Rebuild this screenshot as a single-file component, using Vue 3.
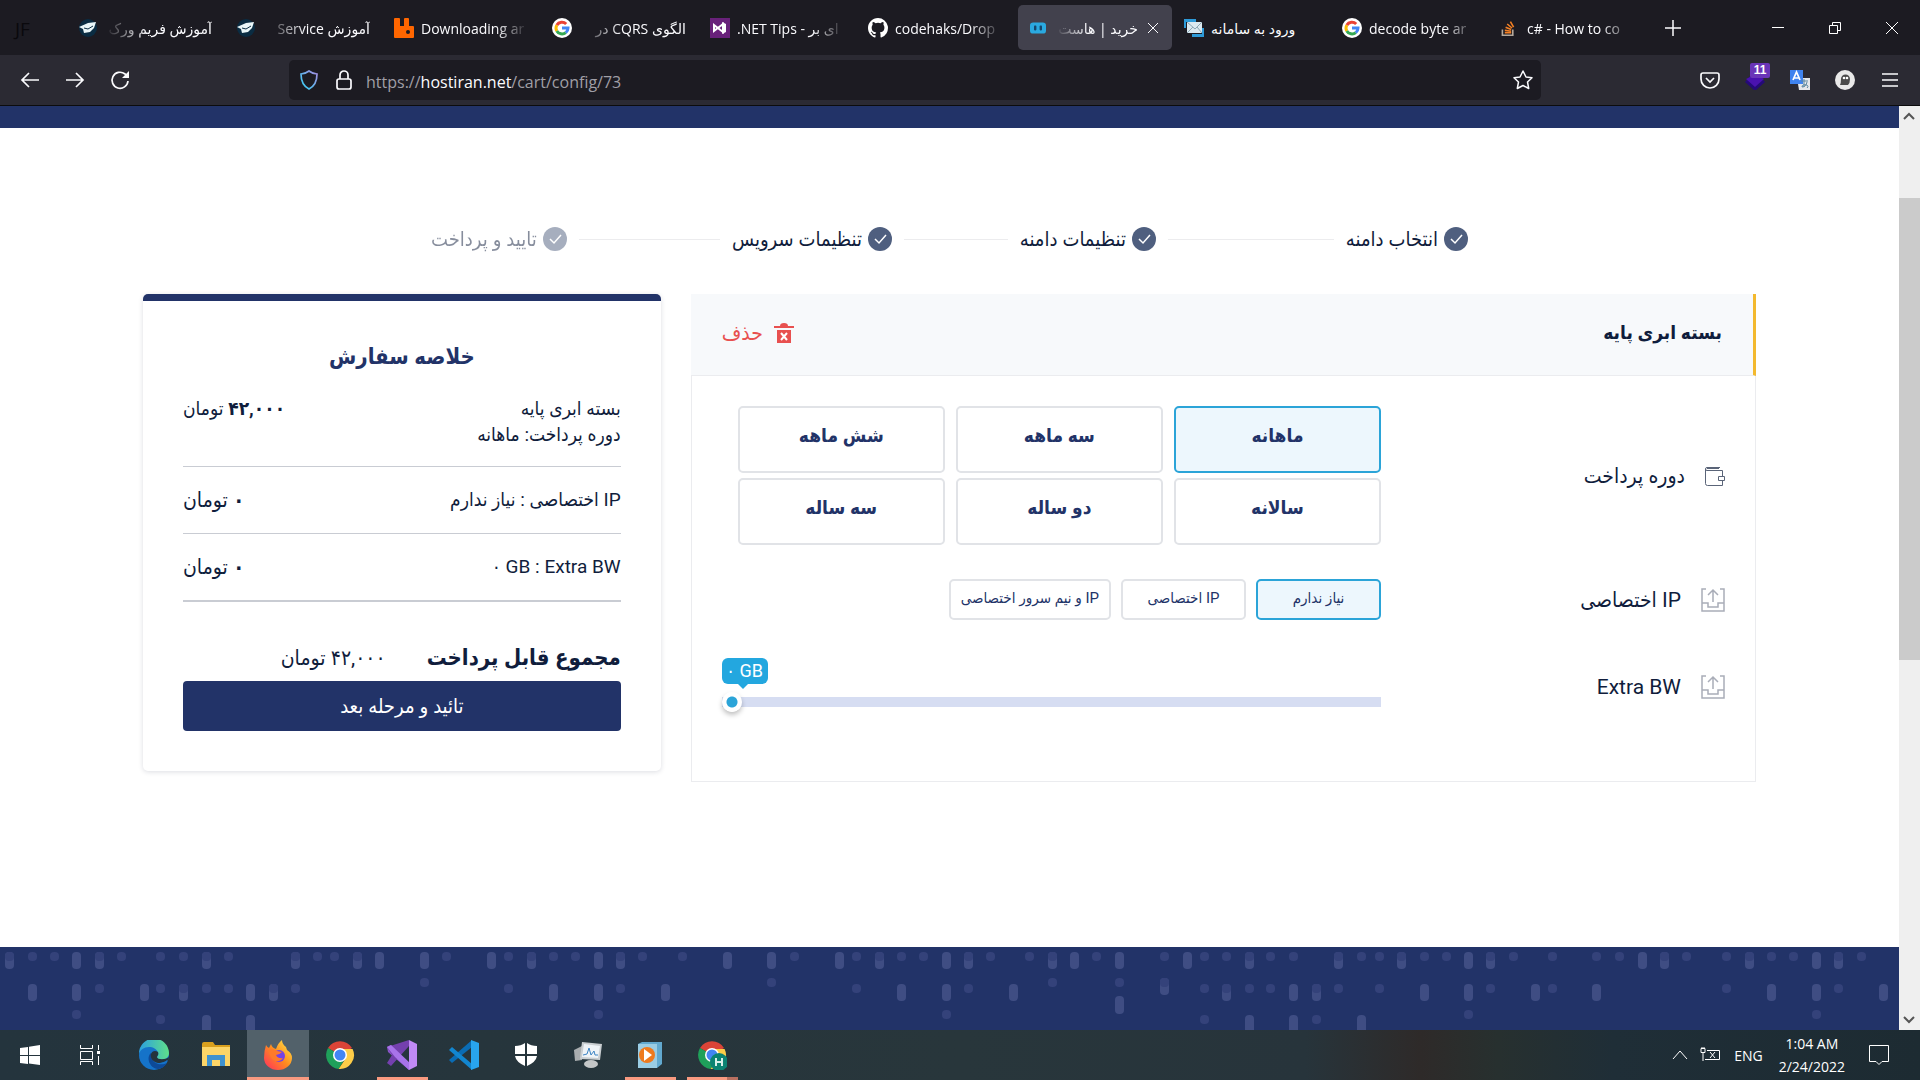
<script setup>
import { ref } from 'vue'

const tabs = [
  { icon: 'cap', title: 'آموزش فریم ورک', rtl: true },
  { icon: 'cap', title: 'آموزش Service', rtl: true },
  { icon: 'rabbit', title: 'Downloading ar' },
  { icon: 'google', title: 'الگوی CQRS در', rtl: true },
  { icon: 'vs', title: '.NET Tips - ای بر' },
  { icon: 'github', title: 'codehaks/Drop' },
  { icon: 'host', title: 'خرید | هاست', rtl: true, active: true },
  { icon: 'mail', title: 'ورود به سامانه', rtl: true, fits: true },
  { icon: 'google', title: 'decode byte ar' },
  { icon: 'stack', title: 'c# - How to co' },
]

const steps = [
  { label: 'انتخاب دامنه', line: 168 },
  { label: 'تنظیمات دامنه', line: 105 },
  { label: 'تنظیمات سرویس', line: 143 },
  { label: 'تایید و پرداخت', pending: true },
]

const periods = ['ماهانه', 'سه ماهه', 'شش ماهه', 'سالانه', 'دو ساله', 'سه ساله']
const ipChoices = ['نیاز ندارم', 'IP اختصاصی', 'IP و نیم سرور اختصاصی']
const period = ref('ماهانه')
const ip = ref('نیاز ندارم')
const bandwidth = ref(0)

const apps = [
  { icon: 'edge', name: 'Edge' },
  { icon: 'folder', name: 'File Explorer' },
  { icon: 'firefox', name: 'Firefox', state: 'focused' },
  { icon: 'chrome', name: 'Chrome' },
  { icon: 'studio', name: 'Visual Studio', state: 'open' },
  { icon: 'code', name: 'VS Code' },
  { icon: 'defender', name: 'Security' },
  { icon: 'monitor', name: 'Performance' },
  { icon: 'player', name: 'Media Player', state: 'open' },
  { icon: 'chromeH', name: 'Chrome profile', state: 'open stacked' },
]

const row = (top, height, xs) => xs.map((x) => ({ x, top, height }))
const drops = [
  ...row(5, 17, [9, 76, 99, 206, 295, 357, 379, 424, 491, 531, 598, 620, 727, 771, 839, 879, 946, 968, 1052, 1074, 1119, 1187, 1249, 1338, 1401, 1468, 1490, 1642, 1664, 1749, 1816, 1838]),
  ...row(37, 17, [32, 76, 144, 183, 250, 273, 553, 598, 665, 901, 946, 1013, 1226, 1293, 1316, 1424, 1468, 1535, 1596, 1771, 1816, 1883]),
  ...row(31, 17, [1164]),
  ...row(49, 18, [1119]),
  ...row(68, 20, [206, 250, 1249, 1293, 1361]),
]
const dots = [
  ...row(5, 9, [9, 32, 54, 99, 121, 160, 183, 206, 228, 295, 317, 334, 357, 446, 508, 531, 553, 575, 620, 642, 682, 794, 856, 879, 901, 923, 968, 990, 1029, 1052, 1096, 1164, 1204, 1226, 1249, 1270, 1293, 1338, 1361, 1379, 1401, 1424, 1446, 1490, 1513, 1552, 1596, 1619, 1664, 1686, 1726, 1749, 1771, 1793, 1838, 1861]),
  ...row(37, 9, [99, 160, 183, 206, 228, 273, 295, 508, 620, 856, 968, 1204, 1226, 1249, 1270, 1316, 1338, 1379, 1490, 1552, 1726, 1838]),
  ...row(31, 9, [424, 771, 1052, 1119, 1164]),
  ...row(63, 9, [76, 598, 946, 1468, 1816]),
  ...row(68, 9, [160, 1204, 1316]),
]
</script>

<template>
  <div class="screen">
    <header class="browser">
      <div class="tabstrip">
        <span class="profile">JF</span>
        <div class="tabs" role="tablist">
          <div v-for="(tab, i) in tabs" :key="i" class="tab" :class="{ active: tab.active }">
            <button class="tab-main" type="button" role="tab" :aria-selected="!!tab.active">
              <svg v-if="tab.icon === 'cap'" class="fav" viewBox="0 0 20 20"><circle cx="10" cy="10" r="9" fill="#0a2c42"/><path d="M1 9 10 5l8-1-2 6-4 4-6 1-1-4z" fill="#e9f6f8"/><path d="m6 10 4 1 5-3" stroke="#0a2c42" fill="none"/></svg>
              <svg v-else-if="tab.icon === 'rabbit'" class="fav" viewBox="0 0 20 20"><path d="M0 1q0-1 1-1h4q1 0 1 1v7h4V1q0-1 1-1h3q1 0 1 1v7h4q1 0 1 1v10q0 1-1 1H1q-1 0-1-1z" fill="#f60"/><circle cx="14" cy="14" r="2" fill="#1c1b22"/></svg>
              <svg v-else-if="tab.icon === 'google'" class="fav" viewBox="0 0 20 20"><circle cx="10" cy="10" r="10" fill="#fff"/><g fill="none" stroke-width="3"><path d="M14.200 6A6 6 0 0 0 4.800 7.100" stroke="#ea4335"/><path d="M4.800 7.100a6 6 0 0 0 0 5.800" stroke="#fbbc05"/><path d="M4.800 12.900a6 6 0 0 0 9 1.700" stroke="#34a853"/><path d="M13.800 14.600A6 6 0 0 0 16 10h-6" stroke="#4285f4"/></g></svg>
              <svg v-else-if="tab.icon === 'vs'" class="fav" viewBox="0 0 20 20"><path d="M0 0h20v20H0z" fill="#68217a"/><path d="m4 7 9 7V6l-9 7z" fill="none" stroke="#fff" stroke-width="2"/><path d="m12 4 4 2v8l-4 2z" fill="#fff"/></svg>
              <svg v-else-if="tab.icon === 'github'" class="fav" viewBox="0 0 16 16"><path fill="#fff" d="M8 0C3.580 0 0 3.580 0 8c0 3.540 2.290 6.530 5.470 7.590.4.070.55-.17.55-.38V13.700c-2.010.37-2.530-.49-2.690-.94-.09-.23-.48-.94-.82-1.130-.28-.15-.68-.52-.01-.53.63-.01 1.080.58 1.230.82.72 1.210 1.870.87 2.330.66.07-.52.28-.87.51-1.070-1.780-.2-3.640-.89-3.640-3.950 0-.87.31-1.590.82-2.150-.08-.2-.36-1.020.08-2.120 0 0 .67-.21 2.200.82a7.600 7.600 0 0 1 4 0c1.530-1.040 2.200-.82 2.200-.82.44 1.100.16 1.920.08 2.120.51.560.82 1.270.82 2.150 0 3.070-1.870 3.750-3.650 3.950.29.25.54.73.54 1.480v2.200c0 .21.15.46.55.38A8 8 0 0 0 8 0z"/></svg>
              <svg v-else-if="tab.icon === 'host'" class="fav" viewBox="0 0 20 20"><rect x="0" y="3" width="20" height="14" rx="4" fill="#2aa9e0"/><rect x="5" y="7" width="3" height="6" rx="1" fill="#16466b"/><rect x="12" y="7" width="3" height="6" rx="1" fill="#16466b"/></svg>
              <svg v-else-if="tab.icon === 'mail'" class="fav" viewBox="0 0 20 20"><path d="M0 1h12v3H2v6H0zM20 19H8v-3h10v-6h2z" fill="#2d9ad8"/><path d="M3 4h15v11H3z" fill="#dbe9f0"/><path d="m3 4 8 7 7-7M3 15l6-6m9 6-5-6" fill="none" stroke="#8ba7b5"/></svg>
              <svg v-else class="fav small" viewBox="0 0 20 20"><path d="M3 12v7h13v-7" fill="none" stroke="#b5a99c" stroke-width="2"/><path d="M6 16h8M6 13l8 1M7 9l7 3M9 5l6 5M13 2l4 7" stroke="#f48024" stroke-width="2"/></svg>
              <span class="tab-title" :class="{ fits: tab.fits }" :dir="tab.rtl ? 'rtl' : 'ltr'">{{ tab.title }}</span>
            </button>
            <button v-if="tab.active" class="tab-close" type="button" aria-label="Close tab">
              <svg width="12" height="12" viewBox="0 0 12 12"><path d="m1 1 10 10M11 1 1 11" stroke="#fbfbfe" stroke-width="1"/></svg>
            </button>
          </div>
        </div>
        <button class="new-tab" type="button" aria-label="New tab"><svg width="16" height="16" viewBox="0 0 16 16"><path d="M8 0v16M0 8h16" stroke="#fbfbfe" stroke-width="1.500"/></svg></button>
        <div class="window-controls">
          <button type="button" aria-label="Minimize"><svg width="14" height="14" viewBox="0 0 14 14"><path d="M1 6.500h12" stroke="#fff"/></svg></button>
          <button type="button" aria-label="Restore"><svg width="14" height="14" viewBox="0 0 14 14" fill="none" stroke="#fff"><path d="M1.500 4.500h8v8h-8zM4.500 4V1.500h8v8H10"/></svg></button>
          <button type="button" aria-label="Close"><svg width="14" height="14" viewBox="0 0 14 14"><path d="m1 1 12 12M13 1 1 13" stroke="#fff"/></svg></button>
        </div>
      </div>

      <div class="toolbar">
        <nav class="nav-buttons">
          <button type="button" aria-label="Back"><svg width="20" height="20" viewBox="0 0 20 20"><path d="M19 10H2m7-7-7 7 7 7"/></svg></button>
          <button type="button" aria-label="Forward"><svg width="20" height="20" viewBox="0 0 20 20"><path d="M1 10h17m-7-7 7 7-7 7"/></svg></button>
          <button type="button" aria-label="Reload"><svg width="20" height="20" viewBox="0 0 20 20"><path d="M18 11a8 8 0 1 1-3-7l2 2"/><path d="M19 1v7h-7z" fill="#fbfbfe" stroke="none"/></svg></button>
        </nav>
        <div class="urlbar">
          <svg width="20" height="20" viewBox="0 0 20 20"><defs><linearGradient id="shield" x1="1" y1="0" x2="0" y2="1"><stop offset="0" stop-color="#a78be0"/><stop offset="1" stop-color="#2fd3f5"/></linearGradient></defs><path d="M10 1q4 3 8 3 0 11-8 15Q2 15 2 4q4 0 8-3z" fill="none" stroke="url(#shield)" stroke-width="1.700"/></svg>
          <svg width="20" height="20" viewBox="0 0 20 20" fill="none" stroke="#fbfbfe" stroke-width="1.700"><rect x="3" y="9" width="14" height="10" rx="2"/><path d="M6 9V5a4 4 0 0 1 8 0v4"/></svg>
          <a class="url" href="https://hostiran.net/cart/config/73">https://<b>hostiran.net</b>/cart/config/73</a>
          <button type="button" aria-label="Bookmark"><svg width="20" height="20" viewBox="0 0 20 20"><path d="m10 1 3 6 6 .7-4.500 4.300 1.200 6.500L10 15.500l-5.700 3 1.200-6.500L1 7.700 7 7z" fill="none" stroke="#fbfbfe" stroke-width="1.500" stroke-linejoin="round"/></svg></button>
        </div>
        <div class="extensions">
          <button type="button" aria-label="Pocket"><svg width="20" height="20" viewBox="0 0 20 20"><path d="M3 3h14q2 0 2 2v4a9 9 0 0 1-18 0V5q0-2 2-2z"/><path d="m6 8 4 4 4-4"/></svg></button>
          <button type="button" class="counted"><svg width="20" height="20" viewBox="0 0 20 20"><path d="m0 12 10 9 10-9-5-6H5z" fill="#250a78"/><path d="m1 9 9 8 9-8-8-5z" fill="#4a12b0"/></svg><span class="count">11</span></button>
          <button type="button" aria-label="Translate"><svg width="20" height="20" viewBox="0 0 20 20"><path d="M7 8h13v12H9z" fill="#e4e7ea"/><path d="M0 0h13v14H0z" fill="#3f83ef"/><path d="m3 10 3.500-8L10 10M4 8h5" stroke="#fff" fill="none"/><path d="M11 11h7m-4-2v8m3-5q-1 5-5 5 0-3 5-2 2 2 0 3" stroke="#5b87a0" fill="none" stroke-width="1"/></svg></button>
          <button type="button" aria-label="Privacy"><svg width="20" height="20" viewBox="0 0 20 20"><circle cx="10" cy="10" r="10" fill="#e9e9e9"/><path d="M5 15q1-2 1-6a4 4 0 0 1 9 0q0 4-2 6z" fill="#4b4b4b"/><circle cx="9" cy="8" r="1.300" fill="#fff"/><circle cx="12" cy="8" r="1.300" fill="#fff"/></svg></button>
          <button type="button" aria-label="Menu"><svg width="16" height="16" viewBox="0 0 16 16"><path d="M0 2h16M0 8h16M0 14h16"/></svg></button>
        </div>
      </div>
    </header>

    <div class="viewport">
      <div class="page" dir="rtl" lang="fa">
        <div class="site-bar"></div>
        <main class="content">
          <ol class="steps">
            <template v-for="step in steps" :key="step.label">
              <li class="step" :class="{ pending: step.pending }">
                <svg width="24" height="24" viewBox="0 0 24 24"><circle cx="12" cy="12" r="12" fill="#4f5f7f"/><path d="m7 12 4 4 7-8" fill="none" stroke="#fff" stroke-width="1.500"/></svg>
                {{ step.label }}
              </li>
              <li v-if="step.line" class="step-line" aria-hidden="true" :style="{ flexGrow: step.line }"></li>
            </template>
          </ol>

          <div class="columns">
            <section class="config">
              <header class="config-head">
                <h2>بسته ابری پایه</h2>
                <button class="remove" type="button">
                  <svg width="20" height="20" viewBox="0 0 20 20"><path d="M0 3h6q0-3 4-3t4 3h6v2H0zM3 7h14v13H3z" fill="#e8504f"/><path d="m7 10 6 7m0-7-6 7" stroke="#fff" stroke-width="2"/></svg>
                  حذف
                </button>
              </header>
              <div class="config-body">
                <fieldset class="field periods">
                  <legend class="sr">دوره پرداخت</legend>
                  <div class="field-label">
                    <svg width="20" height="20" viewBox="0 0 20 20" fill="none" stroke="#5a6478"><path d="M15 1.500H2q-1.500 0-1.500 1.500T2 4.500h15.500v6M.5 3v14.500q0 2 2 2h15v-5M13.500 10.500h6v4h-6z"/><path d="M2 2h12" stroke-width="2"/></svg>
                    <span>دوره پرداخت</span>
                  </div>
                  <div class="period-grid">
                    <label v-for="p in periods" :key="p" class="choice big" :class="{ on: period === p }">
                      <input v-model="period" class="sr" type="radio" name="period" :value="p">{{ p }}
                    </label>
                  </div>
                </fieldset>

                <fieldset class="field ips">
                  <legend class="sr">IP اختصاصی</legend>
                  <div class="field-label">
                    <svg width="24" height="24" viewBox="0 0 24 24" fill="none" stroke="#a9adb8" stroke-width="1.500"><path d="M5 1H1v22h22V1h-4M1 15h6v4h10v-4h6M12 14V2M7 7l5-5 5 5"/></svg>
                    <span>IP اختصاصی</span>
                  </div>
                  <div class="ip-row">
                    <label v-for="c in ipChoices" :key="c" class="choice small" :class="{ on: ip === c }">
                      <input v-model="ip" class="sr" type="radio" name="ip" :value="c">{{ c }}
                    </label>
                  </div>
                </fieldset>

                <div class="field">
                  <label class="field-label" for="bw">
                    <svg width="24" height="24" viewBox="0 0 24 24" fill="none" stroke="#a9adb8" stroke-width="1.500"><path d="M5 1H1v22h22V1h-4M1 15h6v4h10v-4h6M12 14V2M7 7l5-5 5 5"/></svg>
                    <span>Extra BW</span>
                  </label>
                  <div class="slider" dir="ltr">
                    <output class="bubble" for="bw">۰ GB</output>
                    <input id="bw" v-model="bandwidth" type="range" min="0" max="500">
                  </div>
                </div>
              </div>
            </section>

            <aside class="summary">
              <h2>خلاصه سفارش</h2>
              <ul class="lines">
                <li>
                  <span>بسته ابری پایه<br>دوره پرداخت: ماهانه</span>
                  <span><b>۴۲,۰۰۰</b> تومان</span>
                </li>
                <li>
                  <span>IP اختصاصی : نیاز ندارم</span>
                  <span class="price"><b>۰</b> تومان</span>
                </li>
                <li>
                  <span dir="ltr">۰ GB : Extra BW</span>
                  <span class="price"><b>۰</b> تومان</span>
                </li>
              </ul>
              <p class="total"><strong>مجموع قابل پرداخت</strong><span>۴۲,۰۰۰ تومان</span></p>
              <button class="confirm" type="button">تائید و مرحله بعد</button>
            </aside>
          </div>
        </main>
        <footer class="site-footer">
          <svg height="83" aria-hidden="true">
            <rect v-for="(d, i) in drops" :key="'c' + i" :x="d.x - 4" :y="d.top" width="9" :height="d.height" rx="4" fill="#3f4d83"/>
            <rect v-for="(d, i) in dots" :key="'d' + i" :x="d.x - 4" :y="d.top" width="9" :height="d.height" rx="4" fill="#34427a"/>
          </svg>
        </footer>
      </div>
      <div class="scrollbar" aria-hidden="true">
        <svg width="20" height="21" viewBox="0 0 20 21"><path d="m5 13 5-5 5 5" fill="none" stroke="#555" stroke-width="2"/></svg>
        <i class="before"></i><i class="thumb"></i><i class="after"></i>
        <svg width="20" height="21" viewBox="0 0 20 21"><path d="m5 8 5 5 5-5" fill="none" stroke="#555" stroke-width="2"/></svg>
      </div>
    </div>

    <footer class="taskbar">
      <button class="start" type="button" aria-label="Start"><svg width="20" height="20" viewBox="0 0 20 20"><path d="m0 3 8-1v8H0zM9 1.800 20 0v10H9zM0 11h8v8l-8-1zM9 11h11v9L9 18.500z" fill="#fff"/></svg></button>
      <button class="start" type="button" aria-label="Task view"><svg width="20" height="20" viewBox="0 0 20 20" fill="none" stroke="#fff"><path d="M.5 0v3.500h12V0M.5 6.500h12v8H.5zM.5 20v-3.500h12V20M18.500 0v5M18.500 11v9"/><path d="M17 6h3v3h-3z" fill="#fff" stroke="none"/></svg></button>
      <button v-for="app in apps" :key="app.icon" class="app" :class="app.state" type="button" :aria-label="app.name">
        <svg v-if="app.icon === 'edge'" width="30" height="30" viewBox="0 0 30 30"><defs><linearGradient id="e1" x1="0" x2="1"><stop offset="0" stop-color="#2b9fe0"/><stop offset="1" stop-color="#5fe08a"/></linearGradient></defs><circle cx="15" cy="15" r="15" fill="#1573c9"/><path d="M0 14A15 15 0 0 1 30 13c0 4-3 6.500-7 6.500-3 0-5-1-5-2s2-2 1-5C18 9 14 7 10 7 5 7 1 10 0 14z" fill="url(#e1)"/><path d="M12 13c-5 4-2 15 7 16 4 0 8-4 9-6-5 3-15 1-15-6z" fill="#0d4a98"/><path d="M19 12c-3-2-6-1-7 2-1 4 2 8 7 9 4 0 8-2 9-3 1 0 1 1 0 3 2-3 2-6 2-6-3 3-12 3-12 0 0-1 2-2 1-5z" fill="#25343d"/></svg>
        <svg v-else-if="app.icon === 'folder'" width="28" height="26" viewBox="0 0 28 26"><path d="M0 2q0-2 2-2h9l2 3h15v5H0z" fill="#d9a01e"/><path d="M0 5h28v19H0z" fill="#fcd568"/><path d="M5 24V13h18v11h-5v-6h-8v6z" fill="#3f92cf"/></svg>
        <svg v-else-if="app.icon === 'firefox'" width="30" height="30" viewBox="0 0 30 30"><defs><linearGradient id="ff" x1="1" y1="0" x2="0" y2="1"><stop offset="0" stop-color="#fff04a"/><stop offset=".5" stop-color="#ff8a1f"/><stop offset="1" stop-color="#ff2a63"/></linearGradient></defs><path d="M3 5q1 2 3 3l2-4q1 4 5 5 2-6 6-9 0 4 4 7l1 3q5 3 5 8a14 12 0 0 1-28 0q0-7 2-13z" fill="url(#ff)"/><circle cx="16" cy="16" r="6" fill="#7542e4"/><path d="M6 10q5-2 8 1l5 1q-3 3-6 3 2 4 7 3-3 4-8 3-6-3-6-11z" fill="#ff7a2a"/></svg>
        <svg v-else-if="app.icon === 'chrome' || app.icon === 'chromeH'" width="30" height="30" viewBox="0 0 30 30"><path d="M15 15 3 8a14 14 0 0 1 24 0z" fill="#db4437"/><path d="M15 15 3 8a14 14 0 0 0 10.500 21L21 17z" fill="#1fa05a"/><path d="M15 9h12.600a14 14 0 0 1-14 20L21 18z" fill="#fdcd48"/><circle cx="15" cy="15" r="7" fill="#fff"/><circle cx="15" cy="15" r="5.500" fill="#4285f4"/><g v-if="app.icon === 'chromeH'"><circle cx="22" cy="22" r="9" fill="#0b8373"/><path d="M19 18v8m6-8v8m-6-4h6" stroke="#d7efe9" stroke-width="2"/></g></svg>
        <svg v-else-if="app.icon === 'studio'" width="30" height="30" viewBox="0 0 30 30"><path d="M0 7 4 5l18 20v5L1 12z" fill="#8a55c8"/><path d="m0 7 5 8-5 8 4 3L22 6V0z" fill="#7440ae"/><path d="m0 7 4-2 20 19-2 6L8 17z" fill="#a873ea"/><path d="m22 0 8 4v22l-8 4z" fill="#c08af5"/></svg>
        <svg v-else-if="app.icon === 'code'" width="30" height="30" viewBox="0 0 30 30"><path d="m0 20 3 3L23 7V0z" fill="#0a6cb4"/><path d="m0 10 3-3 20 17v6z" fill="#1286d0"/><path d="m22 0 8 3v24l-8 3z" fill="#28a4ee"/></svg>
        <svg v-else-if="app.icon === 'defender'" width="22" height="24" viewBox="0 0 22 24"><path d="M0 3q6 0 10-3v11H0zM12 0q4 3 10 3v8H12zM0 13h10v10Q1 19 0 13zM12 13h10q-1 6-10 10z" fill="#fff"/></svg>
        <svg v-else-if="app.icon === 'monitor'" width="28" height="26" viewBox="0 0 28 26"><path d="m0 8 8-4v14l-7 1z" fill="#a9adaf"/><path d="m8 0 20 2-2 16-20-1z" fill="#c9ced1"/><path d="m10 2 16 2-2 12-16-1z" fill="#eef3f7"/><path d="m9 13 4-1 2-6 2 7 3-4 1 4h3" fill="none" stroke="#3c84c4"/><ellipse cx="17" cy="22" rx="7" ry="4" fill="#c4c7c8"/></svg>
        <svg v-else width="26" height="26" viewBox="0 0 26 26"><path d="M5 0h20v22l-5 4H1V2z" fill="#62a9cf"/><path d="M1 2h19v24H1z" fill="#9bcde4"/><circle cx="10" cy="13" r="8" fill="#ee7a1e"/><path d="m7 7 8 6-8 6z" fill="#fff"/></svg>
      </button>
      <div class="tray">
        <svg width="16" height="16" viewBox="0 0 16 16"><path d="m1 12 7-8 7 8" fill="none" stroke="#fff"/></svg>
        <svg width="20" height="16" viewBox="0 0 20 16" fill="none" stroke="#fff"><path d="M7 3.500h12.500v9H5M1 1.500h4v4H1zM3 6v8M2 0v1m2-1v1M10 5l5 6m0-6-5 6"/></svg>
        <span class="lang">ENG</span>
        <time class="clock" datetime="2022-02-24T01:04">1:04 AM<br>2/24/2022</time>
        <button type="button" aria-label="Notifications"><svg width="22" height="22" viewBox="0 0 22 22"><path d="M1.500 1.500h19v16H14l-3 3-3-3H1.500z" fill="none" stroke="#fff"/></svg></button>
      </div>
    </footer>
  </div>
</template>

<style>
html, body { margin: 0; background: #fff; }
</style>

<style scoped>
.screen, .screen *, .screen *::before, .screen *::after { box-sizing: border-box; }
.screen { min-height: 100vh; display: flex; flex-direction: column; font-family: "Open Sans", "DejaVu Sans", sans-serif; }
button { font: inherit; color: inherit; background: none; border: 0; padding: 0; display: flex; align-items: center; justify-content: center; }
svg { display: block; flex: none; }
.sr { position: absolute; width: 1px; height: 1px; margin: 0; padding: 0; opacity: 0; overflow: hidden; }

.browser { color: #fbfbfe; background: #1c1b22; border-bottom: 1px solid #0c0c0d; }
.tabstrip { display: flex; align-items: center; height: 55px; }
.profile { flex: none; width: 70px; padding: 2px 0 0 15px; font-size: 19px; color: #0a090d; }
.tabs { display: grid; grid-auto-flow: column; grid-auto-columns: minmax(0, 1fr); flex: 0 1 1580px; min-width: 0; }
.tab { display: flex; align-items: center; height: 45px; margin-right: 4px; padding: 0 12px 0 8px; border-radius: 5px; }
.tab.active { background: #42414d; padding: 0 12px; }
.tab-main { flex: 1; min-width: 0; gap: 7px; justify-content: flex-start; }
.active .tab-main { gap: 10px; }
.fav { width: 20px; height: 20px; }
.active .fav, .fav.small { width: 16px; height: 16px; }
.small + .tab-title { padding-left: 4px; }
.tab-title { flex: 1; min-width: 0; overflow: hidden; white-space: nowrap; padding-top: 2px; font-size: 14px; line-height: 24px; text-align: start; mask-image: linear-gradient(to right, #000 70%, transparent); }
.tab-title[dir="rtl"] { mask-image: linear-gradient(to left, #000 60%, transparent); }
.tab-title.fits { text-align: left; mask-image: none; }
.tab-close { width: 14px; margin-left: 8px; }
.new-tab { width: 46px; height: 46px; }
.window-controls { display: flex; margin-left: auto; }
.window-controls button { width: 57px; height: 40px; }

.toolbar { display: grid; grid-template-columns: 289px minmax(0, 1fr) 379px; align-items: center; height: 50px; background: #2b2a33; }
.nav-buttons { display: flex; padding-left: 7px; }
.nav-buttons button, .extensions button { width: 45px; height: 40px; position: relative; }
.nav-buttons path, .extensions svg { fill: none; stroke: #fbfbfe; stroke-width: 1.7; }
.nav-buttons path[fill] { fill: #fbfbfe; stroke: none; }
.extensions button:not(:first-child):not(:last-child) svg { stroke: none; }
.urlbar { display: flex; align-items: center; gap: 15px; height: 40px; padding: 0 8px 0 10px; border-radius: 5px; background: #1c1b22; }
.urlbar svg + .url { margin-left: -3px; }
.url { flex: 1; padding-top: 3px; font-size: 16px; line-height: 24px; color: #a09fa6; text-decoration: none; }
.url b { font-weight: 400; color: #fbfbfe; }
.extensions { display: flex; justify-content: flex-end; padding-right: 8px; }
.count { position: absolute; top: 3px; left: 18px; width: 20px; height: 15px; border-radius: 2px; background: #6a35b8; color: #fff; font: 700 12px/15px "Liberation Sans", sans-serif; text-align: center; }

.viewport { flex: 1; display: flex; }
.page { flex: 1; min-width: 0; display: flex; flex-direction: column; background: #fff; color: #101d3c; font-family: Roboto, "DejaVu Sans Condensed", "DejaVu Sans", sans-serif; font-size: 16px; }
.site-bar { height: 22px; background: #223368; }
.content { flex: 1; width: 85%; max-width: 1613px; margin: 0 auto; padding: 96px 0 40px; }
.steps { display: flex; align-items: center; max-width: 1037px; height: 30px; margin: 0 auto 40px; padding: 0; list-style: none; }
.step { display: flex; align-items: center; gap: 6px; font-size: 20px; line-height: 30px; white-space: nowrap; }
.step.pending { opacity: .5; }
.step-line { height: 1px; margin: 0 12px; background: #ececee; }

.columns { display: grid; grid-template-columns: repeat(3, minmax(0, 1fr)); gap: 30px; align-items: start; }
.config { grid-column: span 2; }
.config-head { display: flex; align-items: center; justify-content: space-between; height: 82px; padding: 0 31px 4px; background: #f7f9fb; border-right: 3px solid #f3b92e; border-bottom: 1px solid #ebecef; }
h2 { margin: 0; font-weight: 700; }
.config-head h2 { font-size: 19px; line-height: 30px; }
.remove { gap: 11px; color: #e8504f; font-size: 21px; line-height: 30px; }
.config-body { padding: 30px 30px 0; height: 406px; border: 1px solid #ebecef; border-top: 0; }
.field { display: grid; grid-template-columns: 344px minmax(0, 1fr); align-items: center; margin: 0; padding: 0; border: 0; position: relative; }
.field-label { display: flex; align-items: center; gap: 20px; font-size: 21px; line-height: 30px; }
.periods { margin-bottom: 34px; }
.period-grid { display: grid; grid-template-columns: repeat(3, minmax(0, 1fr)); gap: 5px 11px; padding-left: 16px; }
.choice { display: flex; align-items: center; justify-content: center; border: 2px solid #e1e3e7; border-radius: 5px; color: #223368; white-space: nowrap; }
.choice.on { border-color: #2ba4d8; background: #edf7fd; }
.big { height: 67px; padding-bottom: 8px; font-size: 19px; font-weight: 700; }
.ips { margin-bottom: 42px; }
.ip-row { display: flex; gap: 10px; }
.small.choice { min-width: 125px; height: 41px; padding: 0 10px 4px; font-size: 15px; }
.slider { position: relative; padding-top: 30px; }
.bubble { position: absolute; top: -4px; left: 0; width: 46px; height: 26px; border-radius: 6px; background: #23a7df; color: #fff; font-size: 18px; line-height: 25px; text-align: center; }
.bubble::after { content: ""; position: absolute; top: 100%; left: 16px; border: 5px solid transparent; border-top-color: #23a7df; }
.slider input { display: block; width: 100%; height: 20px; margin: 0; appearance: none; background: linear-gradient(#d6ddf2, #d6ddf2) center / 100% 10px no-repeat; border-radius: 5px; }
.slider input::-webkit-slider-thumb { appearance: none; width: 20px; height: 20px; border-radius: 50%; background: radial-gradient(circle, #2ba4d8 5px, #fff 6px); box-shadow: 0 3px 5px rgba(0, 0, 0, .25); }

.summary { border-top: 7px solid #223368; border-radius: 5px; padding: 38px 40px 40px; background: #fff; box-shadow: 0 1px 5px rgba(20, 30, 60, .15); }
.summary h2 { color: #223368; font-size: 22px; line-height: 36px; text-align: center; }
.lines { margin: 21px 0 0; padding: 0; list-style: none; font-size: 19px; line-height: 26px; }
.lines li { display: flex; justify-content: space-between; padding-bottom: 18px; margin-bottom: 20px; border-bottom: 1px solid #c9ccd3; }
.lines li + li { padding: 0 0 20px; }
.lines li:last-child { border-bottom-width: 2px; margin-bottom: 0; }
.price { font-size: 21px; }
.total { display: flex; align-items: center; gap: 41px; margin: 37px 0 4px; line-height: 38px; font-size: 21px; }
.total strong { font-size: 22px; }
.confirm { width: 100%; height: 50px; border-radius: 4px; background: #223368; color: #fff; font-size: 20px; }

.site-footer { height: 83px; overflow: hidden; background: #223368; direction: ltr; }
.site-footer svg { width: 100%; }
.scrollbar { display: flex; flex-direction: column; width: 21px; background: #efefef; }
.before { flex: 71; }
.thumb { flex: 462; background: #cbcbcb; }
.after { flex: 349; }

.taskbar { display: flex; height: 50px; color: #fff; background: linear-gradient(to right, #24343d, #28363b 50%, #27343b 68%, #2e2a29 74%, #27302f 78%, #1f2e37 84%, #1d2b32); }
.start { width: 60px; }
.start + .app { margin-left: 3px; }
.app { width: 62px; position: relative; }
.focused { background: #52616a; }
.open::after, .focused::after { content: ""; position: absolute; left: 6px; right: 5px; bottom: 0; height: 3px; background: #f99a80; }
.focused::after { left: 0; right: 0; }
.stacked::after { background: linear-gradient(to right, #f99a80 78%, #b87060 78%); }
.tray { display: flex; align-items: center; margin-left: auto; padding-right: 30px; font-size: 14px; }
.tray svg + svg { margin-left: 12px; }
.lang { margin: 0 16px 0 14px; }
.clock { margin-right: 23px; line-height: 23px; text-align: center; }
</style>
